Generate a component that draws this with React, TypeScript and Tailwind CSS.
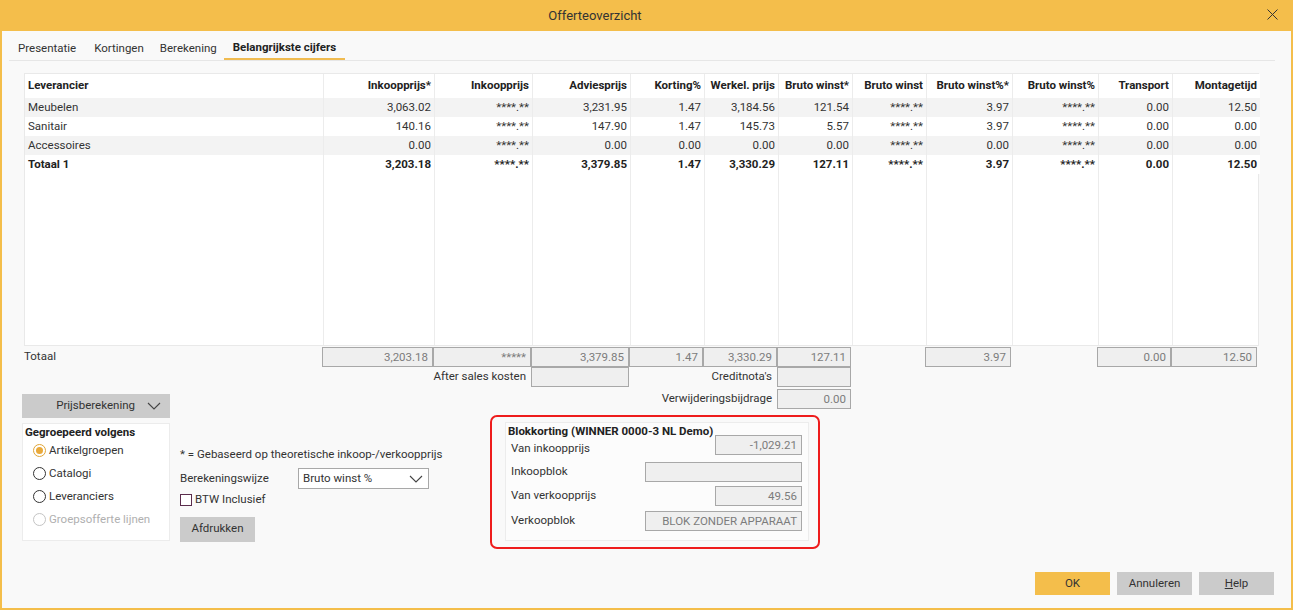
import React from "react";

const cols = "grid-cols-[298px_111px_98px_98px_74px_74px_74px_74px_86px_86px_74px_88px]";

const headers = [
  "Leverancier",
  "Inkoopprijs*",
  "Inkoopprijs",
  "Adviesprijs",
  "Korting%",
  "Werkel. prijs",
  "Bruto winst*",
  "Bruto winst",
  "Bruto winst%*",
  "Bruto winst%",
  "Transport",
  "Montagetijd",
];

const rows: { cells: string[]; bold?: boolean }[] = [
  { cells: ["Meubelen", "3,063.02", "****.**", "3,231.95", "1.47", "3,184.56", "121.54", "****.**", "3.97", "****.**", "0.00", "12.50"] },
  { cells: ["Sanitair", "140.16", "****.**", "147.90", "1.47", "145.73", "5.57", "****.**", "3.97", "****.**", "0.00", "0.00"] },
  { cells: ["Accessoires", "0.00", "****.**", "0.00", "0.00", "0.00", "0.00", "****.**", "0.00", "****.**", "0.00", "0.00"] },
  { cells: ["Totaal 1", "3,203.18", "****.**", "3,379.85", "1.47", "3,330.29", "127.11", "****.**", "3.97", "****.**", "0.00", "12.50"], bold: true },
];

const totals: (string | null)[] = [null, "3,203.18", "*****", "3,379.85", "1.47", "3,330.29", "127.11", null, "3.97", null, "0.00", "12.50"];

function Chevron({ className }: { className?: string }) {
  return (
    <svg width="14" height="8" viewBox="0 0 14 8" className={className}>
      <polyline points="1,1 7,7 13,1" fill="none" stroke="#444" strokeWidth="1.1" />
    </svg>
  );
}

function Box({ value, className }: { value?: string; className?: string }) {
  return (
    <div
      className={`h-[20px] border border-[#a8a8a8] bg-[#efefef] text-[#7c7c7c] text-right pr-[4px] leading-[18px] ${className ?? ""}`}
    >
      {value}
    </div>
  );
}

function Radio({ label, checked, disabled }: { label: string; checked?: boolean; disabled?: boolean }) {
  return (
    <div className={`flex items-center h-[23px] pl-[10px] ${disabled ? "text-[#b0b0b0]" : "text-[#333]"}`}>
      <span
        className={`w-[13px] h-[13px] rounded-full border flex items-center justify-center mr-[3px] bg-white ${
          checked ? "border-[#e0a537]" : disabled ? "border-[#c4c4c4]" : "border-[#333]"
        }`}
      >
        {checked && <span className="w-[7px] h-[7px] rounded-full bg-[#e9a93a]" />}
      </span>
      {label}
    </div>
  );
}

export default function App() {
  return (
    <div className="w-[1293px] h-[610px] flex flex-col text-[11.5px] text-[#333] font-['Roboto',sans-serif] bg-[#f9f9f9]">
      {/* title bar */}
      <div className="h-[31px] bg-[#f4be4b] flex items-center justify-center relative pr-[103px] shrink-0">
        <span className="text-[13px] text-[#333]">Offerteoverzicht</span>
        <svg width="11" height="11" viewBox="0 0 11 11" className="absolute right-[15px] top-[9px]">
          <line x1="0.5" y1="0.5" x2="10.5" y2="10.5" stroke="#333" strokeWidth="1" />
          <line x1="10.5" y1="0.5" x2="0.5" y2="10.5" stroke="#333" strokeWidth="1" />
        </svg>
      </div>

      <div className="flex-1 flex flex-col border-x-2 border-b-2 border-[#f4be4b] bg-[#f9f9f9]">
        {/* tabs */}
        <div className="mt-[7px] ml-[7px] mr-[16px] h-[23px] flex border-b border-[#e6e6e6]">
          {["Presentatie", "Kortingen", "Berekening", "Belangrijkste cijfers"].map((t, i) => (
            <div
              key={t}
              className={`flex items-center ${
                i === 3
                  ? "font-bold text-[#222] border-b-2 border-[#f0bb50] px-[9px] -ml-[2px]"
                  : i === 2
                  ? "text-[#333] pl-[7px] pr-[9px]"
                  : "text-[#333] px-[9px]"
              }`}
            >
              {t}
            </div>
          ))}
        </div>

        {/* table */}
        <div className={`mt-[12px] ml-[22px] w-[1235px] h-[273px] grid ${cols} grid-rows-[24px_19px_19px_19px_19px_1fr] border border-[#e9e9e9] bg-white`}>
          {headers.map((h, i) => (
            <div
              key={h}
              className={`flex items-center font-bold text-[#222] bg-white ${
                i === 0 ? "pl-[3px]" : "justify-end pr-[3px] border-l border-[#ececec]"
              }`}
            >
              {h}
            </div>
          ))}
          {rows.map((r, ri) =>
            r.cells.map((c, i) => (
              <div
                key={`${ri}-${i}`}
                className={`flex items-center ${ri % 2 === 0 ? "bg-[#f3f3f3]" : "bg-white"} ${
                  r.bold ? "font-bold text-[#222]" : "text-[#333]"
                } ${i === 0 ? "pl-[3px]" : "justify-end pr-[3px] border-l border-[#ececec]"}`}
              >
                {c}
              </div>
            ))
          )}
          {headers.map((h, i) => (
            <div key={`f-${h}`} className={i === 0 ? "" : "border-l border-[#ececec]"} />
          ))}
        </div>

        {/* totals */}
        <div className={`mt-[1px] ml-[22px] w-[1235px] grid ${cols}`}>
          {totals.map((t, i) =>
            i === 0 ? (
              <div key={i} className="pt-[1px] text-[#333]">
                Totaal
              </div>
            ) : t === null ? (
              <div key={i} />
            ) : (
              <Box key={i} value={t} className={i === 11 ? "mr-[2px]" : ""} />
            )
          )}
        </div>

        {/* lower section */}
        <div className="flex flex-1">
          <div className="ml-[20px] w-[148px] pt-[27px] flex flex-col">
            <div className="h-[24px] bg-[#cbcbcb] flex items-center justify-end pr-[9px] text-[#333]">
              <span className="mr-[12px]">Prijsberekening</span>
              <Chevron />
            </div>
            <div className="mt-[5px] h-[118px] bg-white border border-[#ececec]">
              <div className="font-bold text-[#222] pl-[2px] h-[15px] leading-[16px]">Gegroepeerd volgens</div>
              <Radio label="Artikelgroepen" checked />
              <Radio label="Catalogi" />
              <Radio label="Leveranciers" />
              <Radio label="Groepsofferte lijnen" disabled />
            </div>
          </div>

          <div className="ml-[10px] flex flex-col">
            <div className="grid grid-cols-[253px_98px_98px_148px_74px] grid-rows-[20px_20px] gap-y-[2px]">
              <div />
              <div className="justify-self-end pr-[5px] self-center whitespace-nowrap">After sales kosten</div>
              <Box />
              <div className="justify-self-end pr-[5px] self-center">Creditnota's</div>
              <Box />
              <div />
              <div />
              <div />
              <div className="justify-self-end pr-[5px] self-center">Verwijderingsbijdrage</div>
              <Box value="0.00" />
            </div>

            <div className="flex mt-[6px]">
              <div className="w-[310px] flex flex-col pt-[31px]">
                <div className="whitespace-nowrap">* = Gebaseerd op theoretische inkoop-/verkoopprijs</div>
                <div className="mt-[5px] flex items-center">
                  <span className="w-[118px]">Berekeningswijze</span>
                  <div className="w-[131px] h-[21px] bg-white border border-[#a8a8a8] flex items-center justify-between pl-[4px] pr-[5px]">
                    <span>Bruto winst %</span>
                    <Chevron />
                  </div>
                </div>
                <div className="flex items-center mt-[2px]">
                  <span className="w-[12px] h-[12px] border border-[#5a2c4c] bg-white mr-[3px]" />
                  <span>BTW Inclusief</span>
                </div>
                <div className="mt-[8px] w-[75px] h-[25px] bg-[#cbcbcb] flex items-center justify-center">Afdrukken</div>
              </div>

              <div className="w-[330px] h-[134px] border-2 border-[#ee1c1c] rounded-[7px] pl-[13px] pr-[9px] pt-[5px] pb-[6px]">
                <div className="h-full bg-[#fcfcfc] border border-[#ececec] pl-[2px] pr-[6px] flex flex-col">
                  <div className="font-bold text-[#222] h-[14px] leading-[14px] mt-[1px]">Blokkorting (WINNER 0000-3 NL Demo)</div>
                  <div className="flex items-center justify-between h-[20px] -mt-[3px] pl-[3px]">
                    <span className="mt-[8px]">Van inkoopprijs</span>
                    <Box value="-1,029.21" className="w-[87px]" />
                  </div>
                  <div className="flex items-center justify-between h-[20px] mt-[7px] pl-[3px]">
                    <span>Inkoopblok</span>
                    <Box className="w-[157px]" />
                  </div>
                  <div className="flex items-center justify-between h-[20px] mt-[4px] pl-[3px]">
                    <span>Van verkoopprijs</span>
                    <Box value="49.56" className="w-[87px]" />
                  </div>
                  <div className="flex items-center justify-between h-[20px] mt-[5px] pl-[3px]">
                    <span>Verkoopblok</span>
                    <Box value="BLOK ZONDER APPARAAT" className="w-[157px]" />
                  </div>
                </div>
              </div>
            </div>
          </div>
        </div>

        {/* footer buttons */}
        <div className="flex justify-end gap-[7px] pr-[17px] pb-[13px]">
          <div className="w-[75px] h-[23px] bg-[#f4be4b] flex items-center justify-center">OK</div>
          <div className="w-[75px] h-[23px] bg-[#cbcbcb] flex items-center justify-center">Annuleren</div>
          <div className="w-[75px] h-[23px] bg-[#cbcbcb] flex items-center justify-center">
            <span>
              <span className="underline">H</span>elp
            </span>
          </div>
        </div>
      </div>
    </div>
  );
}
